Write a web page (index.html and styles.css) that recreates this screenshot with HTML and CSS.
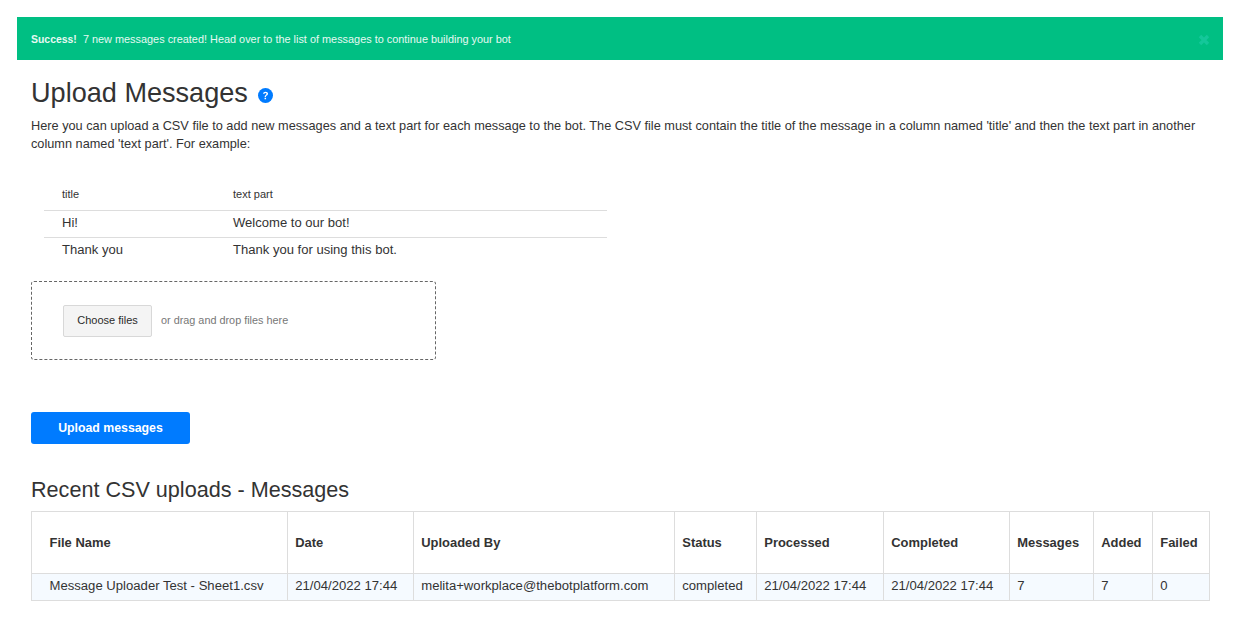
FILE: index.html
```html
<!DOCTYPE html>
<html lang="en">
<head>
<meta charset="utf-8">
<title>Upload Messages</title>
<link rel="stylesheet" href="styles.css">
</head>
<body>
<div class="alert">
  <span class="alert-text"><strong>Success!</strong>&nbsp; 7 new messages created! Head over to the list of messages to continue building your bot</span>
  <svg class="alert-close" viewBox="0 0 12 12" aria-hidden="true"><path d="M2 2 L10 10 M10 2 L2 10" fill="none" stroke="#14c79a" stroke-width="3.4"/></svg>
</div>
<main class="content">
  <div class="title-row">
    <h1>Upload Messages</h1>
    <svg class="help" viewBox="0 0 16 16" aria-hidden="true"><circle cx="8" cy="8" r="8" fill="#007bff"/><path d="M5.4 6.2 C5.5 4.6 6.6 3.9 8.1 3.9 C9.6 3.9 10.7 4.8 10.7 6.1 C10.7 7.1 10.1 7.6 9.4 8.1 C8.7 8.6 8.5 8.9 8.5 9.6 H7.1 C7.1 8.6 7.4 8 8.2 7.4 C8.8 7 9.1 6.7 9.1 6.2 C9.1 5.6 8.7 5.2 8 5.2 C7.3 5.2 6.9 5.6 6.9 6.2 Z M7 10.4 H8.6 V12 H7 Z" fill="#fff"/></svg>
  </div>
  <p class="intro">Here you can upload a CSV file to add new messages and a text part for each message to the bot. The CSV file must contain the title of the message in a column named 'title' and then the text part in another column named 'text part'. For example:</p>
  <table class="example">
    <thead><tr><th class="ex-a">title</th><th>text part</th></tr></thead>
    <tbody>
      <tr><td>Hi!</td><td>Welcome to our bot!</td></tr>
      <tr><td>Thank you</td><td>Thank you for using this bot.</td></tr>
    </tbody>
  </table>
  <div class="dropzone">
    <button class="choose" type="button">Choose files</button>
    <span class="drop-hint">or drag and drop files here</span>
  </div>
  <button class="upload" type="button">Upload messages</button>
  <h2>Recent CSV uploads - Messages</h2>
  <table class="uploads">
    <colgroup>
      <col class="c1"><col class="c2"><col class="c3"><col class="c4"><col class="c5"><col class="c6"><col class="c7"><col class="c8"><col class="c9">
    </colgroup>
    <thead>
      <tr><th>File Name</th><th>Date</th><th>Uploaded By</th><th>Status</th><th>Processed</th><th>Completed</th><th>Messages</th><th>Added</th><th>Failed</th></tr>
    </thead>
    <tbody>
      <tr><td>Message Uploader Test - Sheet1.csv</td><td>21/04/2022 17:44</td><td>melita+workplace@thebotplatform.com</td><td>completed</td><td>21/04/2022 17:44</td><td>21/04/2022 17:44</td><td>7</td><td>7</td><td>0</td></tr>
    </tbody>
  </table>
</main>
</body>
</html>
```

FILE: styles.css
```css
* { box-sizing: border-box; }
html, body { margin: 0; background: #fff; }
body {
  padding: 17px 14px 0 17px;
  font-family: "Liberation Sans", Arial, sans-serif;
  color: #333;
  font-size: 13px;
}
.alert {
  height: 43px;
  background: #00bf83;
  color: #e6f9f2;
  font-size: 10.9px;
  padding: 0 14px;
  display: flex;
  align-items: center;
  justify-content: space-between;
}
.alert-text strong { font-size: 10.45px; }
.alert-close { width: 12px; height: 12px; margin: 2px -1px 0 0; }
.content { padding: 0 13px 0 14px; }
.title-row { display: flex; align-items: center; gap: 10px; margin-top: 16px; height: 34px; }
h1 { margin: 0; font-size: 27.1px; font-weight: 400; line-height: 34px; color: #333; }
.help { width: 15px; height: 15px; margin-top: 4px; }
.intro { margin: 7px 0 0; font-size: 12.74px; line-height: 18px; color: #333; }
.example {
  margin: 24px 0 0 13px;
  width: 563px;
  border-collapse: collapse;
  table-layout: fixed;
}
.example th, .example td { text-align: left; padding: 0 0 0 18px; }
.example th { font-size: 11px; font-weight: 400; height: 33px; padding-top: 2px; color: #333; }
.example td { font-size: 13.05px; height: 27px; padding-bottom: 2px; border-top: 1px solid #ddd; }
.ex-a { width: 171px; }
.dropzone {
  margin-top: 17px;
  width: 405px;
  height: 79px;
  border: 1px dashed #666;
  border-radius: 3px;
  padding-left: 31px;
  display: flex;
  align-items: center;
  gap: 9px;
}
.choose {
  width: 89px;
  height: 32px;
  background: #f4f4f4;
  border: 1px solid #d8d8d8;
  border-radius: 2px;
  color: #2b2b2b;
  font: 11px "Liberation Sans", Arial, sans-serif;
  padding: 0 0 2px;
}
.drop-hint { font-size: 10.85px; color: #777; margin-bottom: 2px; }
.upload {
  display: block;
  margin-top: 52px;
  width: 159px;
  height: 32px;
  background: #007bff;
  border: 0;
  border-radius: 3px;
  color: #fff;
  font: 700 12.3px "Liberation Sans", Arial, sans-serif;
  padding: 0;
}
h2 { margin: 32px 0 0; font-size: 21.6px; font-weight: 400; line-height: 27px; color: #333; }
.uploads {
  margin-top: 8px;
  width: 1178px;
  border-collapse: collapse;
  table-layout: fixed;
}
.uploads th, .uploads td { border: 1px solid #ddd; text-align: left; padding: 0 0 0 7.25px; white-space: nowrap; }
.uploads th { height: 62px; font-size: 12.95px; font-weight: 700; }
.uploads td { height: 27px; padding-bottom: 4px; font-size: 13.12px; background: #f5faff; }
.uploads th:first-child, .uploads td:first-child { padding-left: 17.5px; }
.c1 { width: 256px; }
.c2 { width: 126px; }
.c3 { width: 261px; }
.c4 { width: 82px; }
.c5 { width: 127px; }
.c6 { width: 126px; }
.c7 { width: 84px; }
.c8 { width: 59px; }
.c9 { width: 57px; }
```
